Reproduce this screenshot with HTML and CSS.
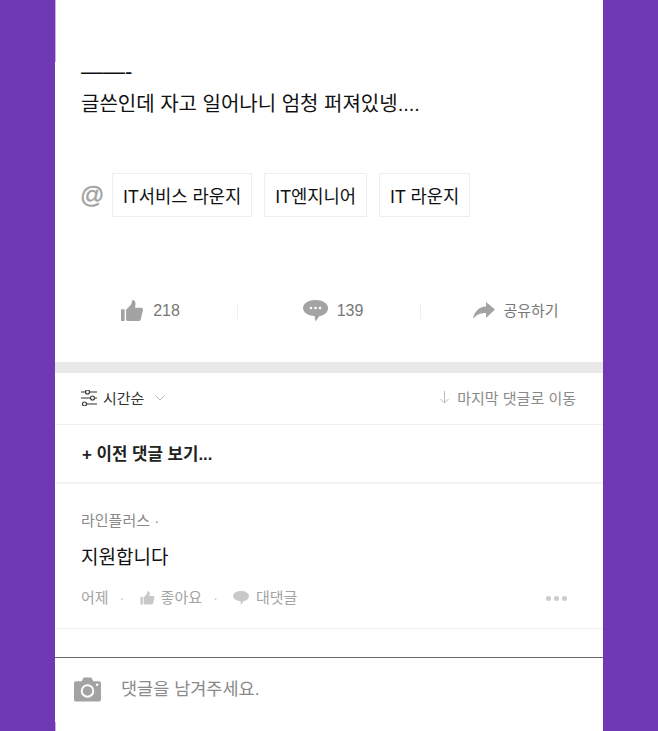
FILE: index.html
```html
<!DOCTYPE html>
<html lang="ko">
<head>
    <meta charset="UTF-8">
    <meta name="viewport" content="width=device-width, initial-scale=1.0">
    <title>게시글</title>
    <link rel="stylesheet" href="styles.css">
</head>
<body>
    <main class="sheet">
        <section class="article">
            <p class="body-text"><span class="dash">——-</span><br>글쓴인데 자고 일어나니 엄청 퍼져있넹....</p>
            <div class="tags">
                <span class="at">@</span>
                <a class="tag">IT서비스 라운지</a>
                <a class="tag">IT엔지니어</a>
                <a class="tag">IT 라운지</a>
            </div>
            <div class="actions">
                <div class="action">
                    <svg class="icon-like" viewBox="0 0 24 24"><path d="M0 10h4v13H0zM5.500 10.500 11 5l1.500-5c2.500 0 3.500 2 3.300 4.500L15.300 8.500H22c1.500 0 2.300 1.200 2 2.500l-2.500 10.500c-.3 1-1 1.500-2 1.500H8c-1.500 0-2.500-1-2.500-2z" fill="#a3a3a3"/></svg>
                    <span>218</span>
                </div>
                <div class="action">
                    <svg class="icon-comment" viewBox="0 0 25 22"><path d="M12.500 0C19.500 0 25 3.300 25 8s-4 7.500-8.500 8L12.500 21.500 11.500 16C5 15.700 0 12.500 0 8S5.500 0 12.500 0z" fill="#a3a3a3"/><circle cx="8" cy="8" r="1.300" fill="#fff"/><circle cx="12.500" cy="8" r="1.300" fill="#fff"/><circle cx="17" cy="8" r="1.300" fill="#fff"/></svg>
                    <span>139</span>
                </div>
                <div class="action share">
                    <svg class="icon-share" viewBox="0 0 22 18"><path d="M13 0 22 7.500 13 16V11C7 11 3 13 0 17 1 10 6 4.500 13 4.500z" fill="#a3a3a3"/></svg>
                    <span>공유하기</span>
                </div>
            </div>
        </section>

        <div class="divider"></div>

        <div class="sort-bar">
            <div class="sort">
                <svg class="icon-sort" viewBox="0 0 16 16" fill="none" stroke="#333" stroke-width="1.100"><path d="M0 2h4.500M8.500 2h7.500M0 8h9.500M13.500 8h2.500M5.500 14h10.500"/><circle cx="6.500" cy="2" r="2"/><circle cx="11.500" cy="8" r="2"/><circle cx="3.500" cy="14" r="2"/></svg>
                <span>시간순</span>
                <svg class="icon-chevron" viewBox="0 0 10 6" fill="none" stroke="#bbb" stroke-width="1"><path d="M.5.500 5 5 9.500.500"/></svg>
            </div>
            <div class="jump">
                <svg class="icon-down" viewBox="0 0 9 13" fill="none" stroke="#bbb" stroke-width="1"><path d="M4.500 0v12M.5 8l4 4 4-4"/></svg>
                <span>마지막 댓글로 이동</span>
            </div>
        </div>

        <div class="more-row">+ 이전 댓글 보기...</div>

        <section class="comment">
            <div class="author">라인플러스 ·</div>
            <p class="comment-text">지원합니다</p>
            <div class="meta">
                <span>어제</span>
                <span class="dot">·</span>
                <svg class="icon-small-like" viewBox="0 0 24 24"><path d="M0 10h4v13H0zM5.500 10.500 11 5l1.500-5c2.500 0 3.500 2 3.300 4.500L15.300 8.500H22c1.500 0 2.300 1.200 2 2.500l-2.500 10.500c-.3 1-1 1.500-2 1.500H8c-1.500 0-2.500-1-2.500-2z" fill="#c9c9c9"/></svg>
                <span>좋아요</span>
                <span class="dot">·</span>
                <svg class="icon-small-comment" viewBox="0 0 25 22"><path d="M12.500 0C19.500 0 25 3.300 25 8s-4 7.500-8.500 8L12.500 21.500 11.500 16C5 15.700 0 12.500 0 8S5.500 0 12.500 0z" fill="#c9c9c9"/></svg>
                <span>대댓글</span>
                <div class="more-dots"><i></i><i></i><i></i></div>
            </div>
        </section>

        <div class="reply-box">
            <svg class="icon-camera" viewBox="0 0 28 25"><path d="M2 4h6l2-4h8l2 4h6a2 2 0 0 1 2 2v17a2 2 0 0 1-2 2H2a2 2 0 0 1-2-2V6a2 2 0 0 1 2-2z" fill="#a3a3a3"/><circle cx="14" cy="14" r="6" fill="none" stroke="#fff" stroke-width="2"/><circle cx="24" cy="7.500" r="1.300" fill="#fff"/></svg>
            <span>댓글을 남겨주세요.</span>
        </div>
    </main>
</body>
</html>
```

FILE: styles.css
```css
html, body {
    margin: 0;
    height: 100%;
}

body {
    background-color: #6f39b5;
    font-family: "Liberation Sans", "Noto Sans CJK KR", sans-serif;
    overflow: hidden;
}

p {
    margin: 0;
}

.sheet {
    position: relative;
    width: 548px;
    height: 731px;
    margin-left: 55px;
    background-color: #fff;
    display: flex;
    flex-direction: column;
}

/* light edge left of the sheet */
.sheet::before,
.sheet::after {
    content: "";
    position: absolute;
    left: 0;
    width: 1px;
    background-color: #c9aee8;
}

.sheet::before {
    top: 0;
    height: 62px;
}

.sheet::after {
    bottom: 0;
    height: 9px;
}

.article {
    height: 362px;
    padding: 56px 26px 0;
    box-sizing: border-box;
}

.body-text {
    font-size: 20px;
    line-height: 32px;
    color: #111;
}

.dash {
    font-size: 22px;
}

.tags {
    display: flex;
    align-items: center;
    margin-top: 53px;
}

.at {
    width: 32px;
    margin-left: -1px;
    font-size: 24px;
    color: #a3a3a3;
    -webkit-text-stroke: 0.4px #a3a3a3;
}

.tag {
    height: 44px;
    padding: 0 10px;
    margin-right: 12px;
    box-sizing: border-box;
    display: flex;
    align-items: center;
    border: 1px solid #eee;
    font-size: 17.7px;
    color: #111;
}

.actions {
    display: flex;
    margin-top: 77px;
    height: 34px;
    margin-left: -26px;
    margin-right: -26px;
}

.action {
    flex: 1;
    display: flex;
    align-items: center;
    justify-content: center;
    gap: 9px;
    padding-left: 8px;
    font-size: 16px;
    line-height: 20px;
    color: #777;
    border-right: 1px solid #eee;
    height: 16px;
    align-self: center;
}

.action.share {
    border-right: none;
    font-size: 15px;
    gap: 8px;
}

.icon-like {
    width: 24px;
    height: 22px;
}

.icon-comment {
    width: 25px;
    height: 22px;
}

.icon-share {
    width: 22px;
    height: 18px;
}

.divider {
    height: 11px;
    background-color: #e9e9e9;
}

.sort-bar {
    height: 52px;
    padding: 0 27px 2px 26px;
    box-sizing: border-box;
    display: flex;
    align-items: center;
    justify-content: space-between;
    border-bottom: 1px solid #eee;
    font-size: 15px;
}

.sort {
    display: flex;
    align-items: center;
    color: #333;
}

.icon-sort {
    width: 16px;
    height: 16px;
    margin-right: 6px;
}

.icon-chevron {
    width: 10px;
    height: 6px;
    margin-left: 11px;
}

.jump {
    display: flex;
    align-items: center;
    gap: 8px;
    color: #8a8a8a;
}

.icon-down {
    width: 9px;
    height: 13px;
}

.more-row {
    height: 59px;
    padding: 0 27px 2px;
    box-sizing: border-box;
    display: flex;
    align-items: center;
    border-bottom: 2px solid #f3f3f3;
    font-size: 16.8px;
    font-weight: bold;
    color: #222;
}

.comment {
    height: 145px;
    padding: 27px 26px 0;
    box-sizing: border-box;
    border-bottom: 1px solid #eee;
}

.author {
    font-size: 15px;
    line-height: 20px;
    color: #8a8a8a;
}

.comment-text {
    margin-top: 14px;
    font-size: 19px;
    line-height: 26px;
    color: #111;
}

.meta {
    display: flex;
    align-items: center;
    margin-top: 17px;
    font-size: 15px;
    line-height: 20px;
    color: #a3a3a3;
}

.dot {
    margin: 0 15px 0 11px;
    color: #ccc;
}

.icon-small-like {
    width: 15px;
    height: 14px;
    margin-right: 6px;
}

.icon-small-comment {
    width: 16px;
    height: 14px;
    margin-right: 7px;
}

.more-dots {
    margin-left: auto;
    display: flex;
    gap: 3px;
    margin-right: 10px;
}

.more-dots i {
    width: 5px;
    height: 5px;
    border-radius: 50%;
    background-color: #ccc;
}

.reply-box {
    margin-top: 28px;
    flex: 1;
    border-top: 1px solid #666;
    padding: 19px 19px 0;
    display: flex;
    align-items: flex-start;
    gap: 20px;
    font-size: 17.5px;
    line-height: 25px;
    color: #8a8a8a;
}

.icon-camera {
    width: 27px;
    height: 25px;
}
```
